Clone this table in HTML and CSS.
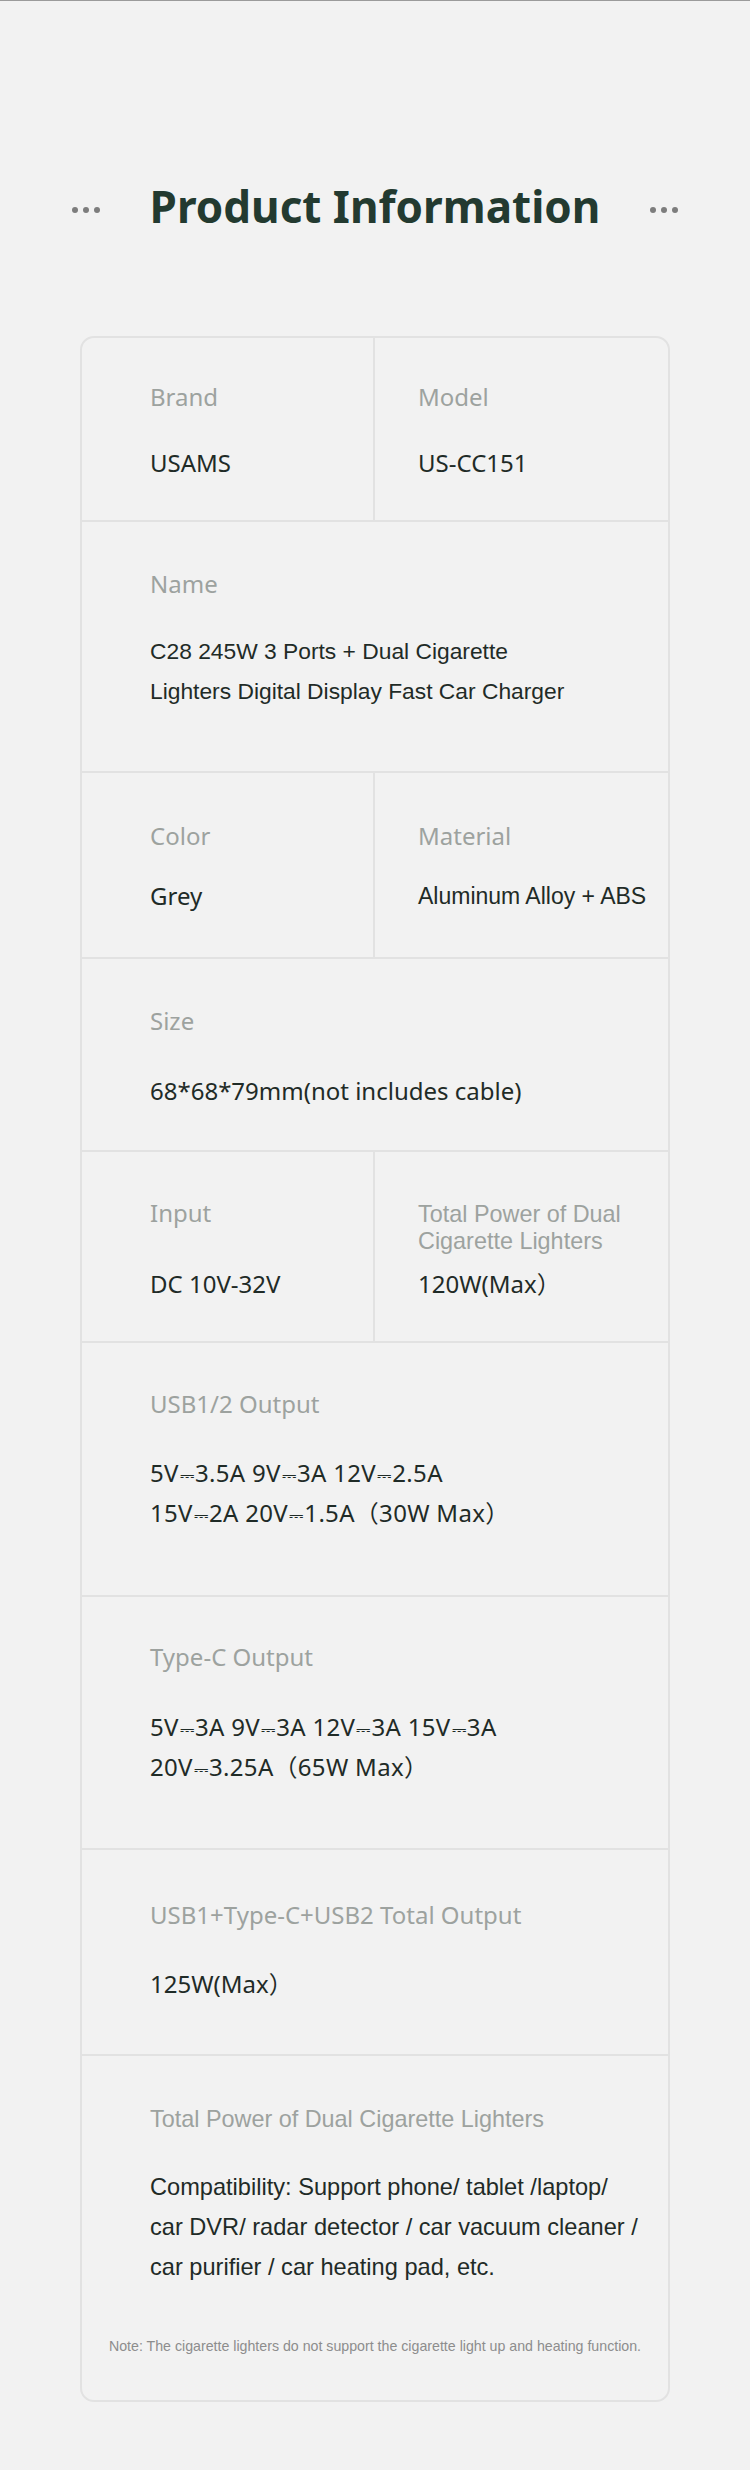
FILE: index.html
```html
<!DOCTYPE html>
<html lang="en">
<head>
<meta charset="utf-8">
<title>Product Information</title>
<link rel="stylesheet" href="styles.css">
</head>
<body>
<main class="page">
  <header class="heading">
    <span class="dots"><i></i><i></i><i></i></span>
    <h1 class="title">Product Information</h1>
    <span class="dots"><i></i><i></i><i></i></span>
  </header>

  <section class="card">
    <div class="row row--split r-brand">
      <div class="cell">
        <div class="label">Brand</div>
        <div class="value">USAMS</div>
      </div>
      <div class="cell cell--right">
        <div class="label">Model</div>
        <div class="value">US-CC151</div>
      </div>
    </div>

    <div class="row r-name">
      <div class="cell">
        <div class="label">Name</div>
        <div class="value value--narrow">C28 245W 3 Ports + Dual Cigarette<br>Lighters Digital Display Fast Car Charger</div>
      </div>
    </div>

    <div class="row row--split r-color">
      <div class="cell">
        <div class="label">Color</div>
        <div class="value">Grey</div>
      </div>
      <div class="cell cell--right">
        <div class="label">Material</div>
        <div class="value value--narrow value--material">Aluminum Alloy + ABS</div>
      </div>
    </div>

    <div class="row r-size">
      <div class="cell">
        <div class="label">Size</div>
        <div class="value">68*68*79mm(not includes cable)</div>
      </div>
    </div>

    <div class="row row--split r-input">
      <div class="cell">
        <div class="label">Input</div>
        <div class="value">DC 10V-32V</div>
      </div>
      <div class="cell cell--right cell--stack">
        <div class="label label--narrow label--two">Total Power of Dual Cigarette Lighters</div>
        <div class="value">120W(Max<span class="fw">）</span></div>
      </div>
    </div>

    <div class="row r-usb">
      <div class="cell">
        <div class="label">USB1/2 Output</div>
        <div class="value value--spec">5V<span class="dc">⎓</span>3.5A 9V<span class="dc">⎓</span>3A 12V<span class="dc">⎓</span>2.5A<br>15V<span class="dc">⎓</span>2A 20V<span class="dc">⎓</span>1.5A<span class="fw">（</span>30W Max<span class="fw">）</span></div>
      </div>
    </div>

    <div class="row r-typec">
      <div class="cell">
        <div class="label">Type-C Output</div>
        <div class="value value--spec">5V<span class="dc">⎓</span>3A 9V<span class="dc">⎓</span>3A 12V<span class="dc">⎓</span>3A 15V<span class="dc">⎓</span>3A<br>20V<span class="dc">⎓</span>3.25A<span class="fw">（</span>65W Max<span class="fw">）</span></div>
      </div>
    </div>

    <div class="row r-total">
      <div class="cell">
        <div class="label">USB1+Type-C+USB2 Total Output</div>
        <div class="value">125W(Max<span class="fw">）</span></div>
      </div>
    </div>

    <div class="row r-lighters">
      <div class="cell">
        <div class="label label--narrow">Total Power of Dual Cigarette Lighters</div>
        <div class="value value--compat">Compatibility: Support phone/ tablet /laptop/<br>car DVR/ radar detector / car vacuum cleaner /<br>car purifier / car heating pad, etc.</div>
      </div>
      <p class="note">Note: The cigarette lighters do not support the cigarette light up and heating function.</p>
    </div>
  </section>
</main>
</body>
</html>
```

FILE: styles.css
```css
* {
  box-sizing: border-box;
}

html,
body {
  margin: 0;
}

body {
  background: #f2f2f2;
  border-top: 1px solid #9b9b9b;
  font-family: "Noto Sans", "Noto Sans CJK SC", sans-serif;
  color: #1f2b27;
}

.page {
  padding: 175px 0 68px;
}

/* ---------- heading ---------- */
.heading {
  display: flex;
  align-items: center;
  justify-content: space-between;
  padding: 0 72px;
}

.dots {
  display: flex;
  gap: 5px;
  margin-top: 8px;
}

.dots i {
  display: block;
  width: 6px;
  height: 6px;
  border-radius: 50%;
  background: #7d7d7d;
}

.title {
  margin: 0;
  font-size: 44px;
  line-height: 60px;
  font-weight: 700;
  color: #233a30;
}

/* ---------- card ---------- */
.card {
  margin: 100px 80px 0;
  border: 2px solid #e2e2e2;
  border-radius: 14px;
}

.row {
  --pt: 44px;
  --gap: 32px;
  --pb: 38px;
  border-top: 2px solid #e2e2e2;
}

.row:first-child {
  border-top: 0;
}

.row--split {
  display: grid;
  grid-template-columns: 291px 1fr;
}

.cell {
  padding: var(--pt) 10px var(--pb) 68px;
}

.cell--right {
  border-left: 2px solid #e2e2e2;
  padding-left: 43px;
  padding-right: 4px;
}

.cell--stack {
  display: flex;
  flex-direction: column;
}

.label {
  font-size: 24px;
  line-height: 34px;
  color: #9da29f;
}

.label--narrow {
  font-family: "Liberation Sans", Arial, sans-serif;
  font-size: 23.4px;
}

.label--two {
  margin-top: 5px;
  line-height: 27px;
}

.value {
  margin-top: var(--gap);
  font-size: 24px;
  line-height: 40px;
  color: #1f2b27;
  white-space: nowrap;
}

.cell--stack .value {
  margin-top: auto;
}

.value--narrow {
  font-family: "Liberation Sans", Arial, sans-serif;
  font-size: 22.8px;
}

.value--material {
  font-size: 23px;
}

.value--spec {
  letter-spacing: 0.3px;
}

.value--compat {
  font-family: "Liberation Sans", Arial, sans-serif;
  font-size: 23.6px;
}

.dc {
  font-family: "DejaVu Sans", sans-serif;
  font-size: 18px;
  line-height: 0;
  margin: 0 1px;
}

.fw {
  line-height: 0;
}

.note {
  margin: 49px 0 0;
  padding-bottom: 44px;
  text-align: center;
  font-family: "Liberation Sans", Arial, sans-serif;
  font-size: 14.2px;
  line-height: 20px;
  color: #8d8d8d;
}

.r-lighters .cell {
  padding-bottom: 0;
}

/* per-row vertical rhythm */
.r-brand   { --pt: 42px; --gap: 29px; --pb: 37px; }
.r-name    { --pt: 45px; --gap: 30px; --pb: 60px; }
.r-color   { --pt: 46px; --gap: 23px; --pb: 41px; }
.r-size    { --pt: 45px; --gap: 33px; --pb: 39px; }
.r-input   { --pt: 44px; --gap: 34px; --pb: 37px; }
.r-usb     { --pt: 44px; --gap: 32px; --pb: 62px; }
.r-typec   { --pt: 43px; --gap: 33px; --pb: 61px; }
.r-total   { --pt: 48px; --gap: 32px; --pb: 50px; }
.r-lighters { --pt: 46px; --gap: 31px; }
```
